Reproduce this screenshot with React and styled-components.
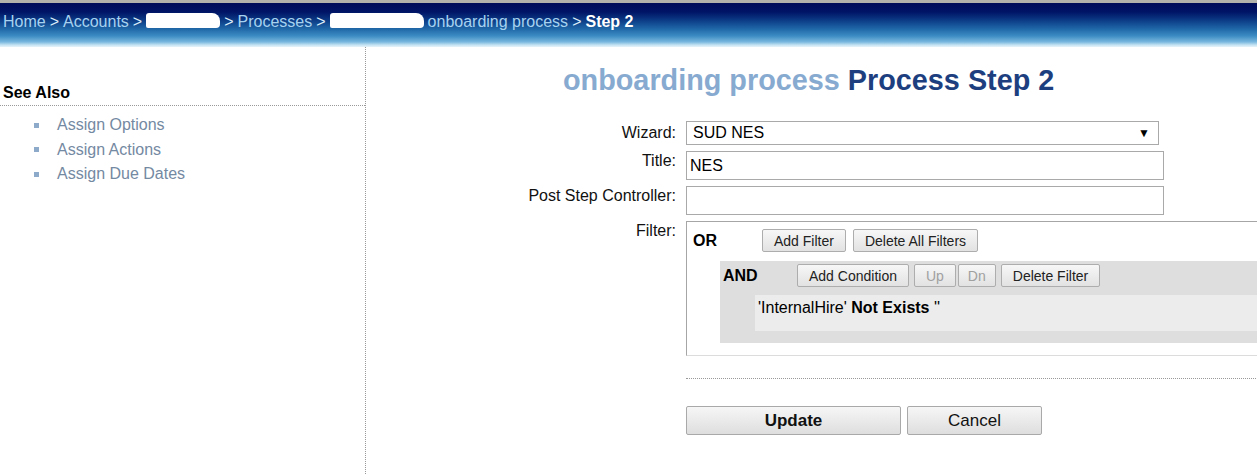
import React from "react";
import styled, { createGlobalStyle } from "styled-components";

const Global = createGlobalStyle`
  html, body { margin: 0; padding: 0; overflow: hidden; background: #fff; }
  body { font-family: "Liberation Sans", Arial, sans-serif; font-size: 16px; color: #000; }
`;

const Page = styled.div`
  width: 1257px;
  height: 474px;
  display: flex;
  flex-direction: column;
  overflow: hidden;
`;

const Header = styled.div`
  height: 47px;
  flex: none;
  border-top: 3px solid #b3b3ab;
  background: linear-gradient(
    to bottom,
    #000d58 0px,
    #001466 9px,
    #0d3f88 18px,
    #1f68a8 26px,
    #3d8cc4 33px,
    #7ab8de 39px,
    #c6e3f3 42px,
    #e6f3fa 44px
  );
  display: flex;
  align-items: flex-start;
  padding: 10px 3px 0;
  box-sizing: border-box;
  white-space: nowrap;
`;

const Crumb = styled.span`
  color: ${(p) => (p.$current ? "#ffffff" : "#a6d2f0")};
  font-weight: ${(p) => (p.$current ? "bold" : "normal")};
  font-size: 16px;
`;

const Sep = styled.span`
  color: #dceefa;
  margin: 0 4px;
`;

const Blob = styled.span`
  display: inline-block;
  width: ${(p) => p.$w}px;
  height: 15px;
  background: #ffffff;
  border-radius: 3px 8px 4px 2px;
  vertical-align: -2px;
  margin-right: ${(p) => p.$mr || 0}px;
`;

const Body = styled.div`
  flex: 1;
  display: flex;
  min-height: 0;
`;

const Sidebar = styled.aside`
  width: 366px;
  flex: none;
  border-right: 1px dotted #999;
  padding-top: 37px;
  box-sizing: border-box;
`;

const SideTitle = styled.h3`
  margin: 0;
  font-size: 16px;
  font-weight: bold;
  padding: 0 3px 3px;
  border-bottom: 1px dotted #999;
  line-height: 18px;
`;

const SideList = styled.ul`
  list-style: none;
  margin: 7px 0 0;
  padding: 0 0 0 34px;
`;

const SideItem = styled.li`
  display: flex;
  align-items: center;
  height: 24.5px;
  color: #7489a2;
  font-size: 16px;
  &::before {
    content: "";
    width: 5px;
    height: 5px;
    background: #8eaacb;
    margin-right: 18px;
  }
`;

const Main = styled.main`
  flex: 1;
  padding-left: 14px;
  min-width: 0;
`;

const Heading = styled.h1`
  margin: 17px 0 0;
  font-size: 28.8px;
  line-height: 33px;
  font-weight: bold;
  white-space: nowrap;
  color: #1d3f80;
`;

const Light = styled.span`
  color: #87aad0;
`;

const HeadBlob = styled.span`
  display: inline-block;
  width: 183px;
  height: 20px;
`;

const Form = styled.div`
  display: grid;
  grid-template-columns: 296px 600px;
  column-gap: 10px;
  margin-top: 24px;
`;

const Label = styled.label`
  text-align: right;
  font-size: 16px;
  color: #111;
  padding-top: ${(p) => p.$pt || 0}px;
  line-height: 18px;
`;

const Field = styled.div`
  margin-bottom: ${(p) => p.$mb || 0}px;
`;

const Select = styled.div`
  width: 473px;
  height: 24px;
  box-sizing: border-box;
  border: 1px solid #a9a9a9;
  display: flex;
  align-items: center;
  justify-content: space-between;
  padding: 0 8px 0 6px;
  font-size: 16px;
  color: #000;
`;

const Arrow = styled.span`
  font-size: 12px;
`;

const Input = styled.div`
  width: 478px;
  height: 29px;
  box-sizing: border-box;
  border: 1px solid #a9a9a9;
  display: flex;
  align-items: center;
  padding: 0 3px;
  font-size: 16px;
  color: #000;
`;

const FilterBox = styled.div`
  width: 600px;
  border: 1px solid #a6a6a6;
  border-bottom-color: #dcdcdc;
  padding: 7px 0 12px 6px;
  box-sizing: border-box;
`;

const Row = styled.div`
  display: flex;
  align-items: center;
`;

const Op = styled.span`
  width: ${(p) => p.$w}px;
  font-weight: bold;
  font-size: 16px;
  flex: none;
`;

const Btn = styled.button`
  height: 23px;
  padding: 0 ${(p) => p.$px || 11}px;
  margin-left: ${(p) => p.$ml || 0}px;
  font-family: "Liberation Sans", Arial, sans-serif;
  font-size: 14px;
  color: ${(p) => (p.disabled ? "#a0a0a0" : "#222")};
  background: linear-gradient(to bottom, #f7f7f7, #e2e2e2);
  border: 1px solid #adadad;
  border-radius: 2px;
  box-sizing: border-box;
`;

const AndBox = styled.div`
  margin: 9px 0 0 27px;
  background: #dedede;
  padding: 3px 0 12px 3px;
`;

const Condition = styled.div`
  margin: 8px 0 0 32px;
  background: #ececec;
  height: 36px;
  padding: 3px 3px 0;
  box-sizing: border-box;
  font-size: 16px;
  line-height: 20px;
`;

const Divider = styled.div`
  grid-column: 2;
  width: 600px;
  border-top: 1px dotted #999;
  margin-top: 22px;
`;

const Actions = styled.div`
  grid-column: 2;
  display: flex;
  gap: 6px;
  margin-top: 27px;
`;

const BigBtn = styled.button`
  width: ${(p) => p.$w}px;
  height: 29px;
  font-family: "Liberation Sans", Arial, sans-serif;
  font-size: 17px;
  font-weight: ${(p) => (p.$primary ? "bold" : "normal")};
  color: #111;
  background: linear-gradient(to bottom, #f6f6f6, #dedede);
  border: 1px solid #a9a9a9;
  border-radius: 2px;
  box-sizing: border-box;
`;

export default function App() {
  return (
    <Page>
      <Global />
      <Header>
        <Crumb>Home</Crumb>
        <Sep>&gt;</Sep>
        <Crumb>Accounts</Crumb>
        <Sep>&gt;</Sep>
        <Blob $w={74} />
        <Sep>&gt;</Sep>
        <Crumb>Processes</Crumb>
        <Sep>&gt;</Sep>
        <Blob $w={94} $mr={4} />
        <Crumb>onboarding process</Crumb>
        <Sep>&gt;</Sep>
        <Crumb $current>Step 2</Crumb>
      </Header>
      <Body>
        <Sidebar>
          <SideTitle>See Also</SideTitle>
          <SideList>
            <SideItem>Assign Options</SideItem>
            <SideItem>Assign Actions</SideItem>
            <SideItem>Assign Due Dates</SideItem>
          </SideList>
        </Sidebar>
        <Main>
          <Heading>
            <HeadBlob />
            <Light>onboarding process</Light> Process Step 2
          </Heading>
          <Form>
            <Label $pt={3}>Wizard:</Label>
            <Field $mb={6}>
              <Select>
                <span>SUD NES</span>
                <Arrow>▼</Arrow>
              </Select>
            </Field>
            <Label $pt={1}>Title:</Label>
            <Field $mb={6}>
              <Input>NES</Input>
            </Field>
            <Label $pt={1}>Post Step Controller:</Label>
            <Field $mb={6}>
              <Input />
            </Field>
            <Label $pt={1}>Filter:</Label>
            <Field>
              <FilterBox>
                <Row>
                  <Op $w={69}>OR</Op>
                  <Btn>Add Filter</Btn>
                  <Btn $ml={7}>Delete All Filters</Btn>
                </Row>
                <AndBox>
                  <Row>
                    <Op $w={74}>AND</Op>
                    <Btn>Add Condition</Btn>
                    <Btn $ml={5} disabled>Up</Btn>
                    <Btn $ml={2} $px={9} disabled>Dn</Btn>
                    <Btn $ml={5}>Delete Filter</Btn>
                  </Row>
                  <Condition>
                    'InternalHire' <b>Not Exists</b> ''
                  </Condition>
                </AndBox>
              </FilterBox>
            </Field>
            <Divider />
            <Actions>
              <BigBtn $w={215} $primary>Update</BigBtn>
              <BigBtn $w={135}>Cancel</BigBtn>
            </Actions>
          </Form>
        </Main>
      </Body>
    </Page>
  );
}
